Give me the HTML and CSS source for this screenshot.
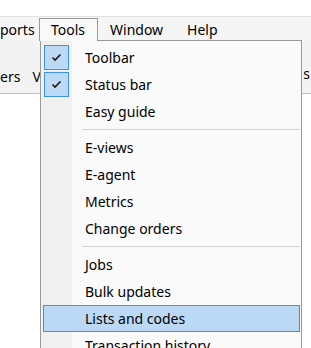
FILE: index.html
```html
<!DOCTYPE html>
<html lang="en">

<head>
    <meta charset="UTF-8">
    <meta name="viewport" content="width=device-width, initial-scale=1.0">
    <title>Tools menu</title>
    <link rel="stylesheet" href="styles.css">
</head>

<body>
    <div class="window">
        <div class="top-strip"></div>

        <!-- Main menu bar -->
        <div class="menubar">
            <span class="menubar-item first">ports</span>
            <span class="menubar-item open">Tools</span>
            <span class="menubar-item">Window</span>
            <span class="menubar-item">Help</span>
        </div>

        <!-- Toolbar row, mostly hidden by the open menu -->
        <div class="toolbar">
            <span class="toolbar-item">ers</span>
            <span class="toolbar-item">V</span>
            <span class="toolbar-spacer"></span>
            <span class="toolbar-item last">s</span>
        </div>

        <!-- Open Tools dropdown -->
        <div class="dropdown">
            <div class="menu-item">
                <span class="check">
                    <svg width="11" height="9" viewBox="0 0 11 9">
                        <path d="M1.5 4.5 L4 7 L9.5 1.5" fill="none" stroke="#1a1a1a" stroke-width="1.6" />
                    </svg>
                </span>
                <span class="label">Toolbar</span>
            </div>
            <div class="menu-item">
                <span class="check">
                    <svg width="11" height="9" viewBox="0 0 11 9">
                        <path d="M1.5 4.5 L4 7 L9.5 1.5" fill="none" stroke="#1a1a1a" stroke-width="1.6" />
                    </svg>
                </span>
                <span class="label">Status bar</span>
            </div>
            <div class="menu-item">
                <span class="label">Easy guide</span>
            </div>
            <div class="separator"></div>
            <div class="menu-item"><span class="label">E-views</span></div>
            <div class="menu-item"><span class="label">E-agent</span></div>
            <div class="menu-item"><span class="label">Metrics</span></div>
            <div class="menu-item"><span class="label">Change orders</span></div>
            <div class="separator"></div>
            <div class="menu-item"><span class="label">Jobs</span></div>
            <div class="menu-item"><span class="label">Bulk updates</span></div>
            <div class="menu-item selected"><span class="label">Lists and codes</span></div>
            <div class="menu-item"><span class="label">Transaction history</span></div>
        </div>
    </div>
</body>

</html>
```

FILE: styles.css
```css
body {
    margin: 0;
    background-color: #fff;
    font-family: "Noto Sans", "Open Sans", sans-serif;
    font-size: 14px;
    color: #000;
    overflow: hidden;
}

.window {
    position: relative;
    width: 311px;
    height: 348px;
    overflow: hidden;
}

.top-strip {
    height: 16px;
    background-color: #fff;
    border-bottom: 1px solid #e3e3e3;
}

.menubar {
    display: flex;
    align-items: flex-end;
    height: 24px;
    background-color: #f5f5f5;
}

.menubar-item {
    height: 23px;
    line-height: 22px;
    padding: 0 11px;
    box-sizing: border-box;
    border: 1px solid transparent;
    border-bottom: none;
}

.menubar-item.first {
    padding: 0;
    margin-left: -1px;
    width: 40px;
}

.menubar-item.open {
    width: 59px;
    border-color: #999;
    background-color: #f9f9f9;
    position: relative;
    z-index: 2;
}

.toolbar {
    display: flex;
    align-items: flex-end;
    height: 53px;
    box-sizing: border-box;
    padding-bottom: 6px;
    background-color: #f3f3f3;
    border-bottom: 1px solid #c4c4c4;
}

.toolbar-item {
    margin-right: 12px;
    line-height: 20px;
}

.toolbar-spacer {
    flex: 1;
}

.toolbar-item.last {
    margin-right: 1px;
    padding-bottom: 3px;
}

.dropdown {
    position: absolute;
    left: 40px;
    top: 40px;
    width: 262px;
    height: 320px;
    box-sizing: border-box;
    padding: 3px 1px 0 2px;
    background: linear-gradient(to right, #f0f0f0 0, #f0f0f0 31px, #fafafa 31px);
    border: 1px solid #999;
    z-index: 1;
}

.menu-item {
    position: relative;
    display: flex;
    align-items: center;
    height: 27px;
    box-sizing: border-box;
    border: 1px solid transparent;
}

.menu-item.selected {
    background-color: #bbd9f5;
    border-color: #3d94e6;
}

.check {
    position: absolute;
    left: 0;
    top: 0;
    width: 23px;
    height: 23px;
    display: flex;
    align-items: center;
    justify-content: center;
    background-color: #bcdaf5;
    border: 1px solid #3d94e6;
}

.label {
    margin-left: 41px;
    line-height: 25px;
}

.separator {
    height: 1px;
    margin: 4px 0 4px 39px;
    background-color: #d4d4d4;
}
```
